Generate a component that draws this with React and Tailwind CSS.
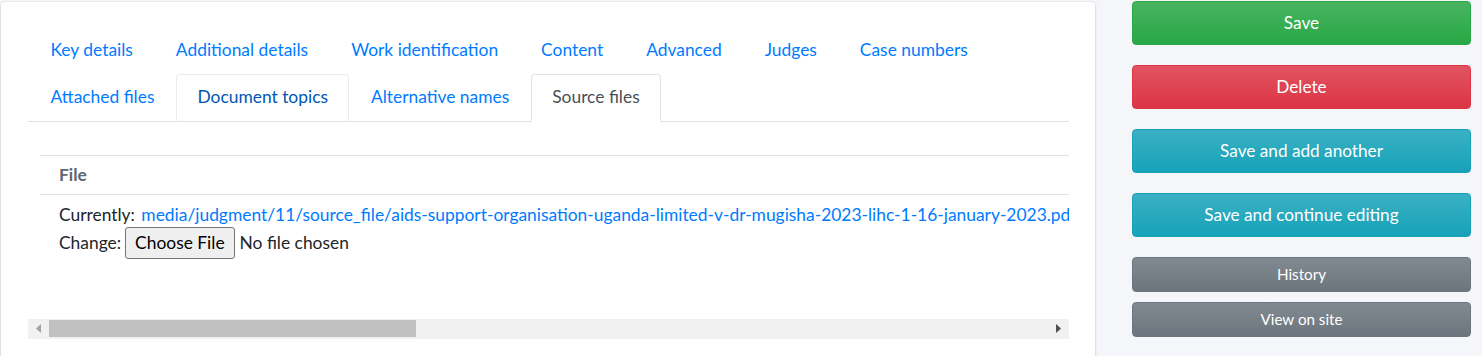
import React from "react";

const rowOne = ["Key details", "Additional details", "Work identification", "Content", "Advanced", "Judges", "Case numbers"];

// Pestañas: la fila 2 lleva el estado "hover" en Document topics y la activa en Source files.
function Tab({ label, state }) {
  let cls = "border-transparent text-[#007bff]";
  if (state === "hover") cls = "border-[#e9ecef] border-b-[#dee2e6] text-[#0056b3] bg-white";
  if (state === "active") cls = "border-[#dee2e6] border-b-white text-[#495057] bg-white";
  return (
    <div className={`-mb-px rounded-t-[4px] border px-[20.5px] pt-[10.5px] pb-[11.5px] leading-6 whitespace-nowrap ${cls}`}>
      {label}
    </div>
  );
}

function ActionButton({ label, from, to, small }) {
  return (
    <button
      type="button"
      className={`w-full rounded-[4px] border text-white ${small ? "h-[35px] text-[15.2px]" : "h-[44px] text-[17.2px]"}`}
      style={{ backgroundImage: `linear-gradient(180deg, ${from}, ${to})`, borderColor: to }}
    >
      {label}
    </button>
  );
}

export default function App() {
  return (
    <div className="flex h-[356px] overflow-hidden bg-[#f4f6f9] font-['Lato',sans-serif] text-[17.4px] text-[#212529]">
      <div className="pl-[1px] pt-[2px]">
        <div className="h-[400px] w-[1094px] rounded-[4px] bg-white pl-[27px] pr-[26px] pt-[24.5px] shadow-[0_0_1px_rgba(0,0,0,0.125),0_1px_3px_rgba(0,0,0,0.2)]">
          <div className="flex flex-wrap border-b border-[#dee2e6] pl-[1px]">
            {rowOne.map((t) => (
              <Tab key={t} label={t} />
            ))}
            <div className="basis-full" />
            <Tab label="Attached files" />
            <Tab label="Document topics" state="hover" />
            <Tab label="Alternative names" />
            <Tab label="Source files" state="active" />
          </div>

          <div className="mt-[33px] w-[1041px] overflow-hidden">
            <div className="ml-[12px] w-[2900px]">
              <div className="border-y border-[#dee2e6] px-[19px] py-[7px] font-bold leading-6 text-[#5c6675]">File</div>
              <div className="px-[19px] pt-[8px] leading-6">
                <div className="whitespace-nowrap">
                  Currently:{" "}
                  <span className="ml-[2px] text-[#007bff]">
                    media/judgment/11/source_file/aids-support-organisation-uganda-limited-v-dr-mugisha-2023-lihc-1-16-january-2023.pdf
                  </span>
                </div>
                <div className="flex items-center whitespace-nowrap">
                  <span>Change:</span>
                  <span className="ml-[4px] flex h-[32px] items-center rounded-[3px] border border-[#767676] bg-[#efefef] px-[9px] text-black">
                    Choose File
                  </span>
                  <span className="ml-[5px]">No file chosen</span>
                </div>
              </div>
            </div>
          </div>

          {/* barra de desplazamiento horizontal dibujada */}
          <div className="mt-[60px] flex h-[20px] w-[1041px] items-center bg-[#f1f1f1]">
            <div className="flex w-[21px] justify-center">
              <svg width="5" height="9" viewBox="0 0 5 9"><path d="M5 0 L0 4.5 L5 9 Z" fill="#a3a3a3" /></svg>
            </div>
            <div className="h-[17px] w-[367px] bg-[#c1c1c1]" />
            <div className="flex-1" />
            <div className="flex w-[21px] justify-center">
              <svg width="5" height="9" viewBox="0 0 5 9"><path d="M0 0 L5 4.5 L0 9 Z" fill="#505050" /></svg>
            </div>
          </div>
        </div>
      </div>

      <div className="ml-[37px] flex w-[339px] flex-col pt-[1px]">
        <ActionButton label="Save" from="#48b461" to="#28a745" />
        <div className="h-[20px]" />
        <ActionButton label="Delete" from="#e15361" to="#dc3545" />
        <div className="h-[20px]" />
        <ActionButton label="Save and add another" from="#3ab0c3" to="#17a2b8" />
        <div className="h-[20px]" />
        <ActionButton label="Save and continue editing" from="#3ab0c3" to="#17a2b8" />
        <div className="h-[20px]" />
        <ActionButton label="History" from="#828a91" to="#6c757d" small />
        <div className="h-[10px]" />
        <ActionButton label="View on site" from="#828a91" to="#6c757d" small />
      </div>
    </div>
  );
}
